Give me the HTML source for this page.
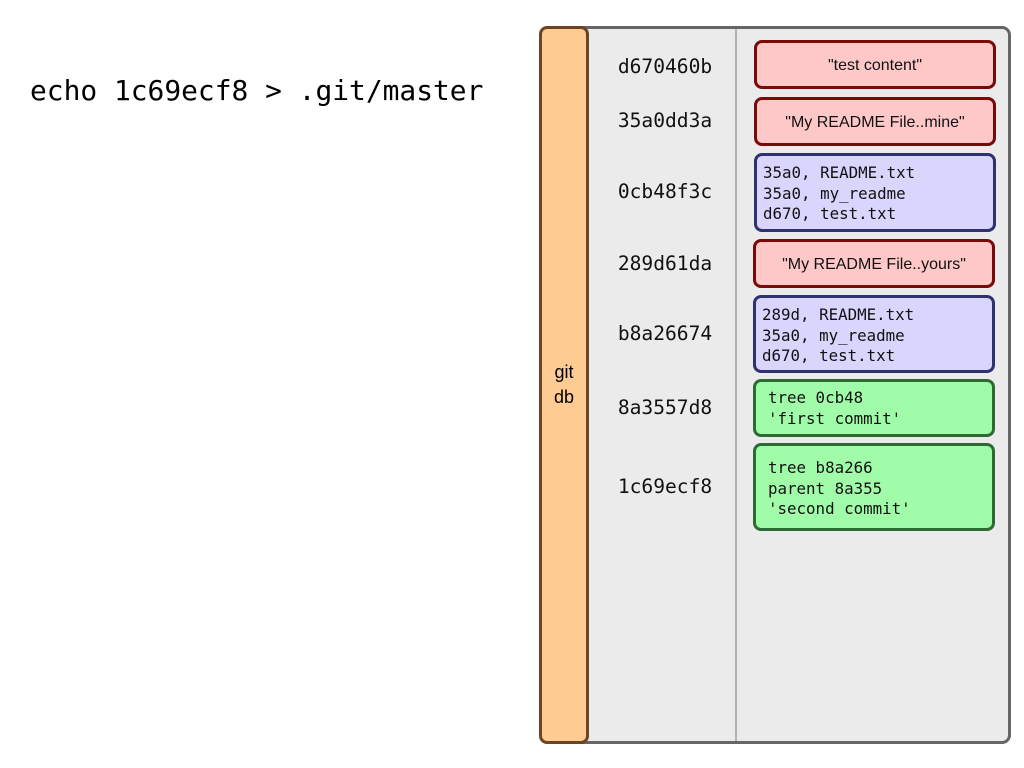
<!DOCTYPE html>
<html><head><meta charset="utf-8"><style>
body{margin:0;width:1024px;height:768px;background:#fff;position:relative;overflow:hidden;font-family:"DejaVu Sans Mono","Liberation Mono",monospace;}
.a{position:absolute;box-sizing:border-box;}
.outer{left:560px;top:26px;width:451px;height:718px;background:#ebebeb;border:3px solid #666;border-radius:9px;}
.bar{left:539px;top:26px;width:50px;height:718px;background:#fecb93;border:3px solid #6e4523;border-radius:8px;}
.div{left:735px;top:29px;width:2px;height:712px;background:#b0b0b0;}
.h{position:absolute;left:600px;width:130px;text-align:center;font-size:19.6px;color:#111;}
.b{position:absolute;box-sizing:border-box;left:754px;width:242px;border:3px solid;border-radius:8px;font-size:15.8px;line-height:20.5px;color:#111;}
.p{background:#ffc8c8;border-color:#7a0a0a;font-family:"Liberation Sans",sans-serif;text-align:center;display:flex;align-items:center;justify-content:center;font-size:16px;padding-top:3px;}
.u{background:#d9d5fd;border-color:#2f3170;padding:7px 0 0 6px;}
.g{background:#a0fca8;border-color:#2e6a34;padding:6px 0 0 12px;}
</style></head><body>
<div class="a" style="left:30px;top:74px;font-size:27.9px;color:#000;white-space:pre">echo 1c69ecf8 &gt; .git/master</div>
<div class="a outer"></div>
<div class="a div"></div>
<div class="a bar"></div>
<div class="a" style="left:539px;top:360px;width:50px;text-align:center;font-family:'Liberation Sans',sans-serif;font-size:18px;line-height:25px;">git<br>db</div>
<div class="h" style="top:55px">d670460b</div>
<div class="h" style="top:109px">35a0dd3a</div>
<div class="h" style="top:180px">0cb48f3c</div>
<div class="h" style="top:252px">289d61da</div>
<div class="h" style="top:322px">b8a26674</div>
<div class="h" style="top:396px">8a3557d8</div>
<div class="h" style="top:475px">1c69ecf8</div>
<div class="b p" style="top:40px;height:49px">"test content"</div>
<div class="b p" style="top:97px;height:49px">"My README File..mine"</div>
<div class="b u" style="top:153px;height:79px">35a0, README.txt<br>35a0, my_readme<br>d670, test.txt</div>
<div class="b p" style="top:239px;height:49px;left:753px">"My README File..yours"</div>
<div class="b u" style="top:295px;height:78px;left:753px;padding-top:7px">289d, README.txt<br>35a0, my_readme<br>d670, test.txt</div>
<div class="b g" style="top:379px;height:58px;left:753px;padding-top:6px">tree 0cb48<br>'first commit'</div>
<div class="b g" style="top:443px;height:88px;left:753px;padding-top:12px">tree b8a266<br>parent 8a355<br>'second commit'</div>
</body></html>
